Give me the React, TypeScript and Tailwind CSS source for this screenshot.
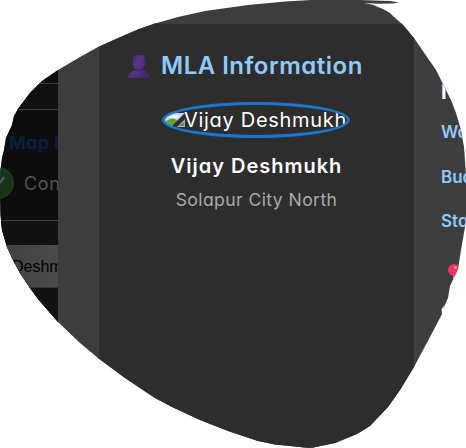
import type { ReactNode } from "react";

function PersonIcon() {
  return (
    <svg className="h-[23px] w-6 shrink-0" viewBox="0 0 24 24" preserveAspectRatio="none" aria-hidden="true">
      <defs>
        <linearGradient id="person" x1="0" y1="0" x2="1" y2="0.4">
          <stop offset="0" stopColor="#452575" />
          <stop offset="0.5" stopColor="#593488" />
          <stop offset="1" stopColor="#472777" />
        </linearGradient>
      </defs>
      <path
        d="M1 23.8C1.4 18.8 5 16.2 9.3 15.8V14.8C7.4 14 6.6 12.4 6.2 10.5L5.4 9.8V8.5L6.1 8.1V3.6Q6.1.3 9.2.3H14.5Q17.5.3 17.5 3.6V8.1L18.6 8.5V9.8L17.6 10.5C17.2 12.4 16.4 14 14.5 14.8V15.8C19 16.2 22.2 18.8 22.6 23.8Z"
        fill="url(#person)"
      />
      <path d="M9.1 14.7C11 15.5 13 15.5 14.6 14.7V16Q12 17.2 9.2 16Z" fill="#452374" />
    </svg>
  );
}

function BrokenImage() {
  return (
    <svg className="-ml-px h-4 w-[21px] shrink-0" viewBox="0 0 21 16" aria-hidden="true">
      <path d="M0 1H21L8 15H0Z" fill="#c3d5f3" />
      <path d="M5 6Q5 4 8 4Q9 2 12 3Q15 3 15 6Z" fill="#eef4fc" />
      <path d="M0 15V11Q8 3 14 9L8 15Z" fill="#55a936" />
      <path d="M10 15L21 5V1L8 14Z" fill="#2d2d2d" />
      <path d="M13 15H21V7Z" fill="#a5b0a6" />
      <path d="M15 14H20V10Z" fill="#66895e" />
    </svg>
  );
}

function Field({ children }: { children: ReactNode }) {
  return <div className="h-[44.5px] text-[17px] leading-6 font-semibold text-[#90caf9]">{children}</div>;
}

export default function App() {
  return (
    <div className="h-[448px] w-[466px] overflow-hidden bg-white font-['Inter','Noto_Sans',sans-serif] [font-feature-settings:'cv11']">
      <main className="flex h-full w-full bg-[#3d3d3d] [clip-path:path('M311_0L285_1.5L248_5L205_11L178_17L155_23.5L139_29L125_35L98_47L80_57L58_70L42_81L30_93L18_109L14_116L12_125L6_138L4_150L2_158L.5_170L0_190L.5_215L2_230L7_247L13_260L20_273L30_288L38_299L58_322L80_343L98_358L125_378L155_398L172_407L200_420L228_431L258_441L275_444.5L300_447L311_448L318_446.5L335_443L357_434L370_426L388_407L400_390L414_367L430_337L442_314L441.5_309L444_307L448_298L450_286L458_269L461_250L465_227L466_215V180L465.5_167L464_147L461_130L456_113L451_100L448_94L436_70L414_38L403_25L393_16L390_13L383_9L372_4.5L364_3L379_3.7L393_3.5L399_2.5L390_1L360_0Z')]">
        <aside className="flex h-full w-[58px] shrink-0 flex-col overflow-hidden bg-[#0c0c0c] whitespace-nowrap">
          <div className="h-[83px] shrink-0" />
          <div className="h-[27px] shrink-0 border-y border-[#3c3c3c] bg-[#101010]" />
          <div className="h-[111px] shrink-0 border-b border-[#3c3d41]">
            <div className="mt-[21px] ml-[9px] text-[18px] leading-6 font-bold tracking-[0.3px] text-[#082040]">Map Legend</div>
            <div className="mt-[12px] -ml-[18px] flex items-center">
              <span className="flex h-8 w-8 shrink-0 items-center justify-center rounded-full border-2 border-[#193d18] bg-[#17351a]">
                <svg className="h-4 w-4" viewBox="0 0 16 16" fill="none" stroke="#626c62" strokeWidth="2" aria-hidden="true">
                  <path d="M2 8L6 13L14 2" />
                </svg>
              </span>
              <span className="ml-[10px] text-[18px] tracking-[0.7px] text-[#565656]">Con</span>
            </div>
          </div>
          <div className="grow bg-[#121212] pt-[24px]">
            <div className="h-[43px] border-b border-[#333] bg-gradient-to-r from-[#414141] to-[#4b4b4b] pl-3 font-['Liberation_Sans',sans-serif] text-base leading-[43px] text-black">
              Deshmukh
            </div>
          </div>
        </aside>
        <section className="h-full w-[356px] shrink-0 pt-[23px] pl-10">
          <div className="h-full border border-r-0 border-[#3d3d3d] bg-[#2d2d2d] whitespace-nowrap">
            <h2 className="mt-[24px] flex h-9 items-center pl-[28px]">
              <PersonIcon />
              <span className="ml-[10px] text-[24px] leading-9 font-semibold tracking-[0.5px] text-[#90caf9]">MLA Information</span>
            </h2>
            <div className="mt-[18px] ml-[63px] flex h-9 w-[188px] items-center overflow-hidden rounded-[50%] border-[3px] border-[#1976d2] text-[20px] text-white">
              <BrokenImage />
              <span className="-ml-px tracking-[0.7px]">Vijay Deshmukh</span>
            </div>
            <h3 className="mt-[13px] text-center text-[20px] leading-[30px] font-semibold tracking-[1px] text-white">Vijay Deshmukh</h3>
            <p className="mt-[6px] text-center text-[17.6px] leading-[26px] tracking-[0.4px] text-[#aaa]">Solapur City North</p>
          </div>
        </section>
        <section className="h-full w-[52px] shrink-0 overflow-hidden border-l border-[#424242] pt-[76px] pl-[26px] whitespace-nowrap">
          <h2 className="mb-[12px] text-[20px] leading-[32px] font-bold text-white">N</h2>
          <Field>Wo</Field>
          <Field>Bud</Field>
          <Field>Sta</Field>
          <svg className="mt-[9px] ml-[6px] h-6 w-4" viewBox="0 0 16 24" aria-hidden="true">
            <path d="M6 11H8V23H6Z" fill="#a79aa8" />
            <circle cx="7" cy="7" r="6" fill="#ee3567" />
            <circle cx="8.3" cy="4.5" r="1.5" fill="#ff83a6" />
          </svg>
          <div className="mt-3 text-[18px] font-semibold text-[#90caf9]">S</div>
        </section>
      </main>
    </div>
  );
}
